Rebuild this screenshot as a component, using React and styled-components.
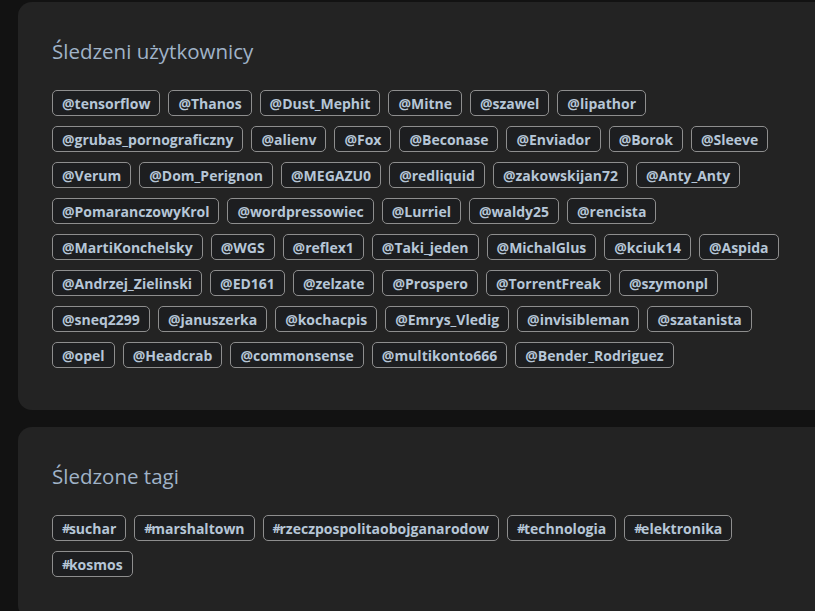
import { styled, createGlobalStyle } from 'styled-components';

const users = [
  'tensorflow', 'Thanos', 'Dust_Mephit', 'Mitne', 'szawel', 'lipathor',
  'grubas_pornograficzny', 'alienv', 'Fox', 'Beconase', 'Enviador', 'Borok', 'Sleeve',
  'Verum', 'Dom_Perignon', 'MEGAZU0', 'redliquid', 'zakowskijan72', 'Anty_Anty',
  'PomaranczowyKrol', 'wordpressowiec', 'Lurriel', 'waldy25', 'rencista',
  'MartiKonchelsky', 'WGS', 'reflex1', 'Taki_jeden', 'MichalGlus', 'kciuk14', 'Aspida',
  'Andrzej_Zielinski', 'ED161', 'zelzate', 'Prospero', 'TorrentFreak', 'szymonpl',
  'sneq2299', 'januszerka', 'kochacpis', 'Emrys_Vledig', 'invisibleman', 'szatanista',
  'opel', 'Headcrab', 'commonsense', 'multikonto666', 'Bender_Rodriguez',
];

const tags = [
  'suchar', 'marshaltown', 'rzeczpospolitaobojganarodow', 'technologia', 'elektronika', 'kosmos',
];

function App() {
  return (
    <Page>
      <GlobalStyle />
      <Card>
        <Title>Śledzeni użytkownicy</Title>
        <ChipList>
          {users.map((name) => (
            <Chip key={name} href="#">@{name}</Chip>
          ))}
        </ChipList>
      </Card>
      <Card>
        <Title>Śledzone tagi</Title>
        <ChipList>
          {tags.map((tag) => (
            <Chip key={tag} href="#"><Hash>#</Hash>{tag}</Chip>
          ))}
        </ChipList>
      </Card>
    </Page>
  );
}

const GlobalStyle = createGlobalStyle`
  html, body {
    margin: 0;
    background: #121212;
    overflow: hidden;
  }

  body {
    font-family: "Open Sans", "Noto Sans", sans-serif;
  }
`;

const Page = styled.main`
  display: flex;
  flex-direction: column;
  gap: 17px;
  padding: 2px 0 0 18px;
  margin-right: -20px;
`;

const Card = styled.section`
  background: #232323;
  border-radius: 14px;
  padding: 35px 34px 42px;
`;

const Title = styled.h2`
  margin: 0 0 25px;
  font-size: 20.5px;
  line-height: 28px;
  font-weight: 500;
  color: #a0b3c8;
`;

const ChipList = styled.div`
  display: flex;
  flex-wrap: wrap;
  column-gap: 8px;
  row-gap: 10px;
`;

const Chip = styled.a`
  display: inline-flex;
  align-items: center;
  height: 26px;
  box-sizing: border-box;
  padding: 0 9px;
  border: 1px solid #8e8e8e;
  border-radius: 5px;
  background: #1d1e20;
  color: #b6c6d7;
  font-size: 14px;
  font-weight: 700;
  text-decoration: none;
  white-space: nowrap;
`;

const Hash = styled.span`
  font-size: 13px;
  letter-spacing: -1.5px;
`;

export default App;
